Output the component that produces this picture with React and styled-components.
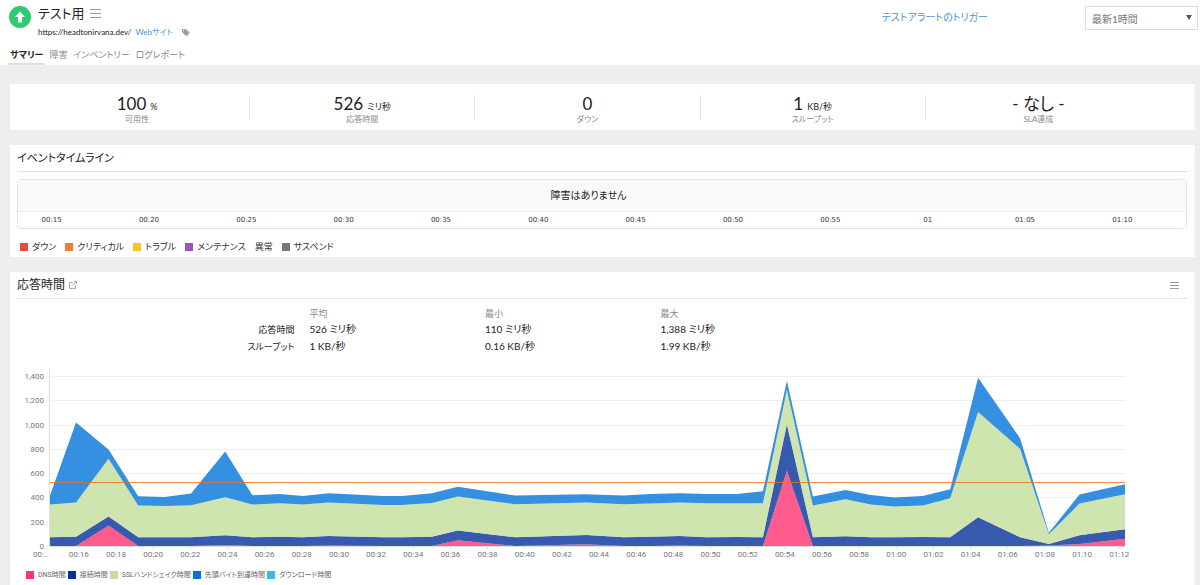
import React, { useState } from 'react';
import styled, { createGlobalStyle } from 'styled-components';

const GlobalStyle = createGlobalStyle`
	* {
		box-sizing: border-box;
	}
	body {
		margin: 0;
		background: #eee;
		color: #333;
		font-family: Lato, 'Noto Sans CJK JP', sans-serif;
		font-feature-settings: 'palt';
		font-size: 9px;
		line-height: 12px;
	}
	h1, h2, p, dl, dt, dd, ul {
		margin: 0;
		padding: 0;
		font-weight: 400;
	}
	ul {
		list-style: none;
	}
	a {
		color: #4795d6;
		text-decoration: none;
	}
	button {
		display: flex;
		padding: 0;
		border: 0;
		background: none;
		cursor: pointer;
	}
`;

const Page = styled.div`
	display: flex;
	flex-direction: column;
	min-height: 100vh;
`;

/* header */
const Header = styled.header`
	padding: 4px 2px 0 8px;
	background: #fff;
	border-bottom: 1px solid #f4f4f4;
`;
const HeaderTop = styled.div`
	display: flex;
	align-items: flex-start;
	height: 42px;
`;
const Status = styled.svg`
	flex: none;
	width: 24px;
	height: 24px;
	margin-right: 6px;
`;
const Monitor = styled.div`
	flex: 1;
`;
const TitleRow = styled.div`
	display: flex;
	align-items: center;
	gap: 5px;
	height: 18px;
`;
const Title = styled.h1`
	font-size: 13px;
	line-height: 18px;
	color: #222;
`;
const UrlRow = styled.div`
	display: flex;
	align-items: center;
	gap: 4px;
	height: 20px;
	font-size: 8px;
	color: #222;
`;
const TagButton = styled.button`
	margin-left: 4px;
`;
const HeaderLink = styled.a`
	margin: 7px 97px 0 0;
	font-size: 10px;
`;
const SelectBox = styled.label`
	position: relative;
	width: 113px;
	margin-top: 2px;
`;
const Select = styled.select`
	width: 100%;
	height: 24px;
	padding: 2px 6px 0;
	border: 1px solid #ddd;
	border-radius: 0;
	background: #fff;
	color: #777;
	font: inherit;
	font-size: 10px;
	appearance: none;
`;
const Caret = styled.svg`
	position: absolute;
	top: 9px;
	right: 6px;
	pointer-events: none;
`;
const Tabs = styled.nav`
	display: flex;
	gap: 2px;
`;
const Tab = styled.a`
	padding: 3px 2px 2px;
	border-bottom: 2px solid ${(p) => (p.$active ? '#ddd' : 'transparent')};
	color: ${(p) => (p.$active ? '#222' : '#888')};
	font-weight: ${(p) => (p.$active ? 700 : 400)};
	line-height: 12px;
`;

/* content */
const Main = styled.main`
	display: flex;
	flex: 1;
	flex-direction: column;
	gap: 15px;
	padding: 18px 5px 0 10px;
`;
const Stats = styled.dl`
	display: grid;
	grid-template-columns: repeat(5, 1fr);
	padding: 11px 44px 10px 15px;
	background: #fff;
`;
const Stat = styled.div`
	display: flex;
	flex-direction: column-reverse;
	height: 25px;
	border-right: 1px solid #e6e6e6;
	text-align: center;
	&:last-child {
		border-right: 0;
	}
`;
const StatLabel = styled.dt`
	margin-bottom: -5px;
	color: #888;
	font-size: 8px;
	line-height: 12px;
`;
const StatValue = styled.dd`
	color: #222;
	font-size: 17px;
	line-height: 18px;
	small {
		margin-left: 4px;
		font-size: 9px;
		line-height: 0;
	}
`;
const Card = styled.section`
	flex: ${(p) => (p.$grow ? 1 : 'none')};
	padding: 0 8px 4px 7px;
	background: #fff;
`;
const CardHead = styled.header`
	display: flex;
	align-items: center;
	gap: 4px;
	height: 27px;
	border-bottom: 1px solid #e2e2e2;
`;
const CardTitle = styled.h2`
	color: #222;
	font-size: ${(p) => (p.$small ? '11px' : '12px')};
	line-height: 18px;
`;
const MenuButton = styled.button`
	margin: 0 8px 0 auto;
`;

const Timeline = styled.div`
	margin-top: 7px;
	border: 1px solid #e4e4e4;
	border-radius: 4px;
	overflow: hidden;
`;
const NoOutage = styled.p`
	padding-right: 27px;
	border-bottom: 1px solid #eee;
	background: #fafafa;
	color: #222;
	font-size: 10px;
	line-height: 31px;
	text-align: center;
`;
const TimelineAxis = styled.div`
	display: grid;
	grid-template-columns: repeat(12, 1fr);
	font-family: 'DejaVu Sans', sans-serif;
	font-size: 7px;
	line-height: 16px;
	text-align: center;
	span {
		padding-right: 30px;
	}
`;
const Legend = styled.ul`
	display: flex;
	gap: 9px;
	padding: 12px 3px 0;
`;
const LegendItem = styled.li`
	display: flex;
	align-items: center;
	gap: 4px;
`;
const Swatch = styled.i`
	width: 8px;
	height: 8px;
	background: ${(p) => p.$color};
`;

const Summary = styled.table`
	width: 100%;
	margin-top: 7px;
	border-collapse: collapse;
	table-layout: fixed;
	color: #222;
	text-align: left;
	th, td {
		padding: 0;
		font-weight: 400;
		line-height: 17px;
	}
	td {
		font-size: 10px;
	}
`;
const ColHead = styled.th`
	width: ${(p) => p.$width};
	&& {
		color: #888;
		line-height: 15px;
	}
`;
const RowHead = styled.th`
	&& {
		padding-right: 15px;
		text-align: right;
	}
`;
const Chart = styled.svg`
	display: block;
	width: 100%;
	margin-top: 10px;
	font-family: Roboto, sans-serif;
	font-size: 8px;
	fill: #777;
`;
const ChartLegend = styled(Legend)`
	gap: 2px;
	padding: 9px 9px 0;
	font-family: Roboto, 'Noto Sans CJK JP', sans-serif;
	font-size: 7px;
	line-height: 10px;
	color: #666;
`;

const stats = [
	{ value: '100', unit: '%', label: '可用性' },
	{ value: '526', unit: 'ミリ秒', label: '応答時間' },
	{ value: '0', label: 'ダウン' },
	{ value: '1', unit: 'KB/秒', label: 'スループット' },
	{ value: '- なし -', label: 'SLA達成' },
];

const tabs = ['サマリー', '障害', 'インベントリー', 'ログレポート'];

const timelineTicks = [
	'00:15', '00:20', '00:25', '00:30', '00:35', '00:40',
	'00:45', '00:50', '00:55', '01', '01:05', '01:10',
];

const statuses = [
	{ name: 'ダウン', color: '#e64c3c' },
	{ name: 'クリティカル', color: '#f37a33' },
	{ name: 'トラブル', color: '#f7c325' },
	{ name: 'メンテナンス', color: '#9c56b8' },
	{ name: '異常' },
	{ name: 'サスペンド', color: '#777' },
];

const series = [
	{ name: 'DNS時間', color: '#ff3370' },
	{ name: '接続時間', color: '#05309a' },
	{ name: 'SSLハンドシェイク時間', color: '#c3de9c' },
	{ name: '先頭バイト到達時間', color: '#0274d9' },
	{ name: 'ダウンロード時間', color: '#2bc4dc' },
];

// [minute, DNS, connect, SSL, first byte], each value stacked on the one before
const points = [
	[14.45, 0, 72, 341, 415],
	[15.85, 0, 77, 358, 1018],
	[17.6, 168, 242, 718, 795],
	[19.2, 0, 72, 333, 410],
	[20.62, 0, 72, 330, 404],
	[22.04, 0, 72, 336, 432],
	[23.88, 8, 88, 402, 778],
	[25.34, 0, 72, 341, 418],
	[26.83, 0, 77, 352, 429],
	[28.06, 0, 72, 341, 412],
	[29.44, 5, 83, 358, 434],
	[32.4, 0, 72, 338, 412],
	[33.39, 0, 72, 338, 412],
	[35, 0, 77, 355, 434],
	[36.4, 47, 127, 407, 487],
	[39.49, 0, 72, 344, 415],
	[43.31, 14, 91, 358, 426],
	[45.35, 0, 72, 344, 415],
	[46.75, 0, 77, 349, 429],
	[48.33, 5, 83, 358, 434],
	[49.8, 0, 72, 352, 429],
	[51.42, 0, 74, 352, 429],
	[52.82, 0, 72, 352, 451],
	[54.11, 619, 1001, 1287, 1361],
	[55.51, 0, 72, 333, 407],
	[57.26, 0, 80, 385, 462],
	[58.63, 0, 72, 341, 421],
	[59.9, 0, 72, 325, 399],
	[61.42, 0, 74, 333, 412],
	[62.9, 0, 72, 393, 468],
	[64.4, 0, 237, 1103, 1386],
	[66.66, 0, 72, 800, 888],
	[68.21, 5, 17, 96, 110],
	[69.86, 17, 88, 349, 424],
	[72.31, 60, 138, 426, 509],
];

const LEFT = 33;
const RIGHT = 1108;
const xAt = (min) => LEFT + (min - 14.45) * 18.58;
const yAt = (ms) => 181 - (ms * 170) / 1400;

const band = (i) => {
	const top = points.map((p) => `${xAt(p[0])},${yAt(p[i])}`);
	const bottom = points.map((p) => `${xAt(p[0])},${yAt(i > 1 ? p[i - 1] : 0)}`).reverse();
	return [...top, ...bottom].join(' ');
};

const clock = (min) =>
	`${String(Math.floor(min / 60)).padStart(2, '0')}:${String(min % 60).padStart(2, '0')}`;

const Bars = ({ width, height, color }) => (
	<svg width={width} height={height} viewBox={`0 0 ${width} ${height}`} stroke={color}>
		{[0.5, height / 2, height - 0.5].map((y) => (
			<path key={y} d={`M0 ${y}H${width}`} />
		))}
	</svg>
);

const ResponseChart = () => (
	<Chart viewBox="0 0 1170 196" role="img" aria-label="応答時間">
		<g stroke="#eee">
			{[200, 400, 600, 800, 1000, 1200, 1400].map((v) => (
				<path key={v} d={`M${LEFT} ${Math.round(yAt(v)) + 0.5}H${RIGHT}`} />
			))}
			<path d={`M${LEFT - 0.5} 4V181`} stroke="#ddd" />
			<path d={`M${LEFT} 181.5H${RIGHT}`} stroke="#ddd" />
		</g>
		{[0, 200, 400, 600, 800, 1000, 1200, 1400].map((v) => (
			<text key={v} x="27" y={yAt(v) + 3} textAnchor="end">
				{v.toLocaleString('en-US')}
			</text>
		))}
		{[1, 2, 3, 4].map((i) => (
			<polygon key={i} points={band(i)} fill={series[i - 1].color} fillOpacity="0.8" />
		))}
		<path d={`M${LEFT} 117.5H${RIGHT}`} stroke="#ee6f20" strokeOpacity="0.8" />
		<text x="16" y="192">00:..</text>
		<svg width="1112" height="196">
			{Array.from({ length: 29 }, (_, i) => 16 + i * 2).map((min) => (
				<g key={min}>
					<path d={`M${xAt(min)} 181v3`} stroke="#ddd" />
					<text x={xAt(min)} y="192" textAnchor="middle">
						{clock(min)}
					</text>
				</g>
			))}
		</svg>
	</Chart>
);

const App = () => {
	const [range, setRange] = useState('1h');

	return (
		<Page>
			<GlobalStyle />
			<Header>
				<HeaderTop>
					<Status viewBox="0 0 24 24">
						<circle cx="12" cy="13" r="11" fill="#2ecc71" />
						<path d="M12 7.5l5 5.5h-3v5.5h-4V13H7z" fill="#fff" />
					</Status>
					<Monitor>
						<TitleRow>
							<Title>テスト用</Title>
							<button aria-label="メニュー">
								<Bars width={11} height={9} color="#999" />
							</button>
						</TitleRow>
						<UrlRow>
							<span>https://headtonirvana.dev/</span>
							<a href="#website">Webサイト</a>
							<TagButton aria-label="タグ">
								<svg width="9" height="9" viewBox="0 0 9 9">
									<path d="M1 1h3l4 4-3 3-4-4z" fill="#999" />
									<path d="M5 1l3.5 3.5L5.5 8.5" fill="none" stroke="#aaa" />
									<circle cx="2.5" cy="2.5" r="0.7" fill="#fff" />
								</svg>
							</TagButton>
						</UrlRow>
					</Monitor>
					<HeaderLink href="#alert">テストアラートのトリガー</HeaderLink>
					<SelectBox>
						<Select aria-label="期間" value={range} onChange={(e) => setRange(e.target.value)}>
							<option value="1h">最新1時間</option>
						</Select>
						<Caret width="6" height="5" viewBox="0 0 6 5">
							<path d="M0 0h6L3 5z" fill="#555" />
						</Caret>
					</SelectBox>
				</HeaderTop>
				<Tabs>
					{tabs.map((tab, i) => (
						<Tab key={tab} href={`#tab${i}`} $active={i === 0}>
							{tab}
						</Tab>
					))}
				</Tabs>
			</Header>

			<Main>
				<Stats>
					{stats.map((s) => (
						<Stat key={s.label}>
							<StatLabel>{s.label}</StatLabel>
							<StatValue>
								{s.value}
								{s.unit && <small>{s.unit}</small>}
							</StatValue>
						</Stat>
					))}
				</Stats>

				<Card>
					<CardHead>
						<CardTitle $small>イベントタイムライン</CardTitle>
					</CardHead>
					<Timeline>
						<NoOutage>障害はありません</NoOutage>
						<TimelineAxis>
							{timelineTicks.map((t) => (
								<span key={t}>{t}</span>
							))}
						</TimelineAxis>
					</Timeline>
					<Legend>
						{statuses.map((s) => (
							<LegendItem key={s.name}>
								{s.color && <Swatch $color={s.color} />}
								{s.name}
							</LegendItem>
						))}
					</Legend>
				</Card>

				<Card $grow>
					<CardHead>
						<CardTitle>応答時間</CardTitle>
						<button aria-label="開く">
							<svg width="8" height="8" viewBox="0 0 8 8" fill="none" stroke="#aaa">
								<path d="M4 1.5H.5v6h6V4M3.5 4.5l4-4M5 .5h2.5V3" />
							</svg>
						</button>
						<MenuButton aria-label="メニュー">
							<Bars width={9} height={7} color="#999" />
						</MenuButton>
					</CardHead>
					<Summary>
						<thead>
							<tr>
								<ColHead $width="25%" />
								<ColHead $width="15%">平均</ColHead>
								<ColHead $width="15%">最小</ColHead>
								<ColHead $width="45%">最大</ColHead>
							</tr>
						</thead>
						<tbody>
							<tr>
								<RowHead>応答時間</RowHead>
								<td>526 ミリ秒</td>
								<td>110 ミリ秒</td>
								<td>1,388 ミリ秒</td>
							</tr>
							<tr>
								<RowHead>スループット</RowHead>
								<td>1 KB/秒</td>
								<td>0.16 KB/秒</td>
								<td>1.99 KB/秒</td>
							</tr>
						</tbody>
					</Summary>
					<ResponseChart />
					<ChartLegend>
						{series.map((s) => (
							<LegendItem key={s.name}>
								<Swatch $color={s.color} />
								{s.name}
							</LegendItem>
						))}
					</ChartLegend>
				</Card>
			</Main>
		</Page>
	);
};

export default App;
